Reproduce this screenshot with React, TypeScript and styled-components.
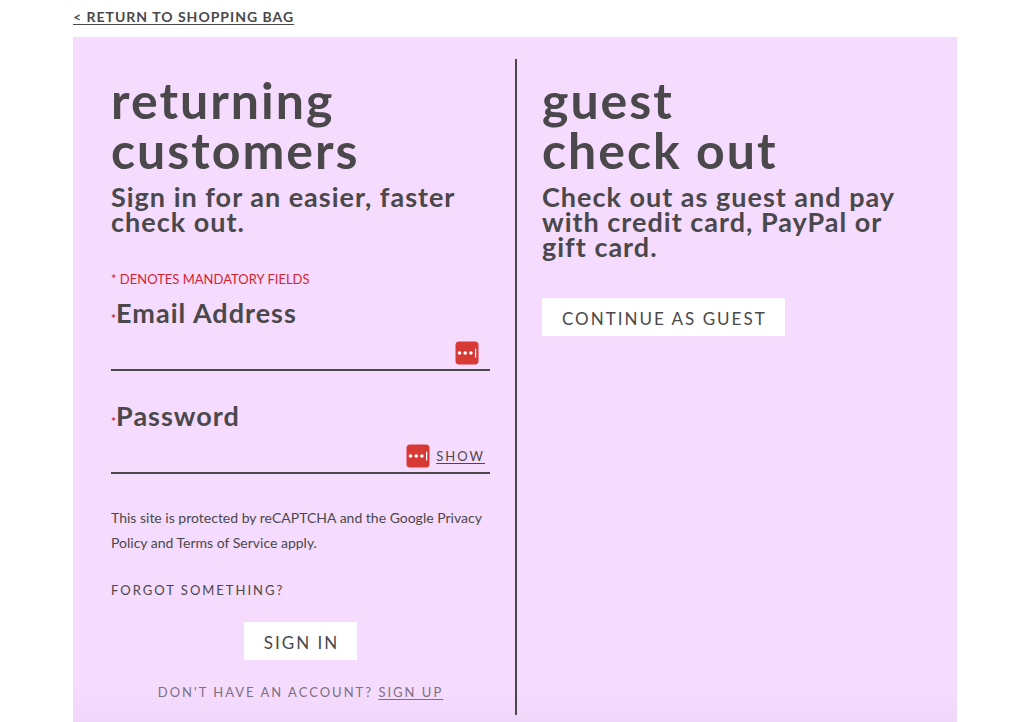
import React, { useState } from "react";
import styled, { createGlobalStyle } from "styled-components";

const ink = "#4a484b";

const GlobalStyle = createGlobalStyle`
  * { box-sizing: border-box; }
  body {
    margin: 0;
    background: #fff;
    color: ${ink};
    font-family: Lato, "Open Sans", sans-serif;
  }
  h1, p { margin: 0; }
`;

const Page = styled.main`
  padding: 0 67px 0 73px;
`;

const TopBar = styled.nav`
  height: 37px;
  padding-top: 6px;
`;

const BackLink = styled.a`
  color: ${ink};
  font-size: 14px;
  font-weight: 700;
  line-height: 20px;
  letter-spacing: 1px;
  text-underline-offset: 2px;
`;

const Panel = styled.div`
  display: grid;
  grid-template-columns: 1fr 1fr;
  padding: 22px 34px 8px 38px;
  background: linear-gradient(to top, #f0d7f9, #f5dbfe 32px);
`;

const Column = styled.section<{ $divided?: boolean }>`
  padding: ${(p) => (p.$divided ? "16px 25px 13px 0" : "16px 0 13px 25px")};
  border-right: ${(p) => (p.$divided ? `2px solid ${ink}` : "0")};
`;

const Title = styled.h1`
  font-size: 50px;
  font-weight: 700;
  line-height: 50px;
  letter-spacing: 2px;
`;

const Lead = styled.p`
  margin-top: 9px;
  font-size: 27px;
  font-weight: 700;
  line-height: 25px;
  letter-spacing: 1px;
`;

const Mandatory = styled.p`
  margin-top: 35px;
  color: #d8232f;
  font-size: 13px;
  line-height: 20px;
`;

const Field = styled.div`
  display: flex;
  flex-direction: column;
  height: 82px;
  border-bottom: 2px solid ${ink};

  & + & {
    margin-top: 21px;
  }
`;

const Label = styled.label`
  display: flex;
  flex: none;
  align-items: baseline;
  height: 47px;
  font-size: 27px;
  font-weight: 700;
  line-height: 48px;
  letter-spacing: 1px;
`;

const Star = styled.span`
  color: #d8232f;
  font-size: 12px;
  line-height: 12px;
  letter-spacing: 0;
`;

const Entry = styled.div<{ $end: number }>`
  display: flex;
  align-items: center;
  gap: 6px;
  height: 33px;
  padding-right: ${(p) => p.$end}px;
`;

const TextInput = styled.input`
  flex: 1;
  min-width: 0;
  height: 32px;
  padding: 0;
  border: 0;
  outline: 0;
  background: transparent;
  color: ${ink};
  font: 400 17px Lato, sans-serif;
`;

const IconButton = styled.button`
  display: flex;
  padding: 0;
  border: 0;
  background: none;
  cursor: pointer;
`;

const ShowButton = styled.button`
  padding: 0;
  border: 0;
  background: none;
  color: ${ink};
  font: 400 13px/20px Lato, sans-serif;
  letter-spacing: 2px;
  text-decoration: underline;
  text-underline-offset: 2px;
  cursor: pointer;
`;

const Legal = styled.p`
  margin-top: 31px;
  font-size: 14px;
  line-height: 25px;
`;

const ForgotLink = styled.a`
  display: block;
  width: max-content;
  margin-top: 25px;
  color: ${ink};
  font-size: 13px;
  line-height: 20px;
  letter-spacing: 2px;
  text-decoration: none;
`;

const Action = styled.button<{ $centered?: boolean }>`
  display: block;
  height: 38px;
  margin: ${(p) => (p.$centered ? "22px auto 0" : "39px 0 0")};
  padding: 2px 18px 0 20px;
  border: 0;
  background: #fff;
  color: ${ink};
  font: 400 17px Lato, sans-serif;
  letter-spacing: 2px;
  cursor: pointer;
`;

const SignUp = styled.p`
  margin-top: 22px;
  color: #7c7081;
  font-size: 13px;
  line-height: 20px;
  letter-spacing: 2px;
  text-align: center;

  a {
    color: inherit;
    text-underline-offset: 2px;
  }
`;

function VaultIcon() {
  return (
    <svg width="24" height="24" viewBox="0 0 24 24" aria-hidden="true">
      <rect x="0.5" y="0.5" width="23" height="23" rx="3.5" fill="#d73a35" />
      <circle cx="4.5" cy="12" r="1.8" fill="#fff" />
      <circle cx="10.2" cy="12" r="1.8" fill="#fff" />
      <circle cx="15.9" cy="12" r="1.8" fill="#fff" />
      <rect x="20" y="7.5" width="1.2" height="9" rx="0.6" fill="#fff" />
    </svg>
  );
}

export default function App() {
  const [visible, setVisible] = useState(false);

  return (
    <>
      <GlobalStyle />
      <Page>
        <TopBar>
          <BackLink href="#bag">&lt; RETURN TO SHOPPING BAG</BackLink>
        </TopBar>
        <Panel>
          <Column $divided>
            <Title>
              returning
              <br />
              customers
            </Title>
            <Lead>
              Sign in for an easier, faster
              <br />
              check out.
            </Lead>
            <Mandatory>* DENOTES MANDATORY FIELDS</Mandatory>
            <form onSubmit={(e) => e.preventDefault()}>
              <Field>
                <Label htmlFor="email">
                  <Star>*</Star>Email Address
                </Label>
                <Entry $end={11}>
                  <TextInput id="email" type="email" />
                  <IconButton type="button" aria-label="Fill email">
                    <VaultIcon />
                  </IconButton>
                </Entry>
              </Field>
              <Field>
                <Label htmlFor="password">
                  <Star>*</Star>Password
                </Label>
                <Entry $end={5}>
                  <TextInput id="password" type={visible ? "text" : "password"} />
                  <IconButton type="button" aria-label="Fill password">
                    <VaultIcon />
                  </IconButton>
                  <ShowButton type="button" onClick={() => setVisible(!visible)}>
                    SHOW
                  </ShowButton>
                </Entry>
              </Field>
              <Legal>
                This site is protected by reCAPTCHA and the Google Privacy
                <br />
                Policy and Terms of Service apply.
              </Legal>
              <ForgotLink href="#forgot">FORGOT SOMETHING?</ForgotLink>
              <Action type="submit" $centered>
                SIGN IN
              </Action>
              <SignUp>
                DON'T HAVE AN ACCOUNT? <a href="#signup">SIGN UP</a>
              </SignUp>
            </form>
          </Column>
          <Column>
            <Title>
              guest
              <br />
              check out
            </Title>
            <Lead>
              Check out as guest and pay
              <br />
              with credit card, PayPal or
              <br />
              gift card.
            </Lead>
            <Action type="button">CONTINUE AS GUEST</Action>
          </Column>
        </Panel>
      </Page>
    </>
  );
}
